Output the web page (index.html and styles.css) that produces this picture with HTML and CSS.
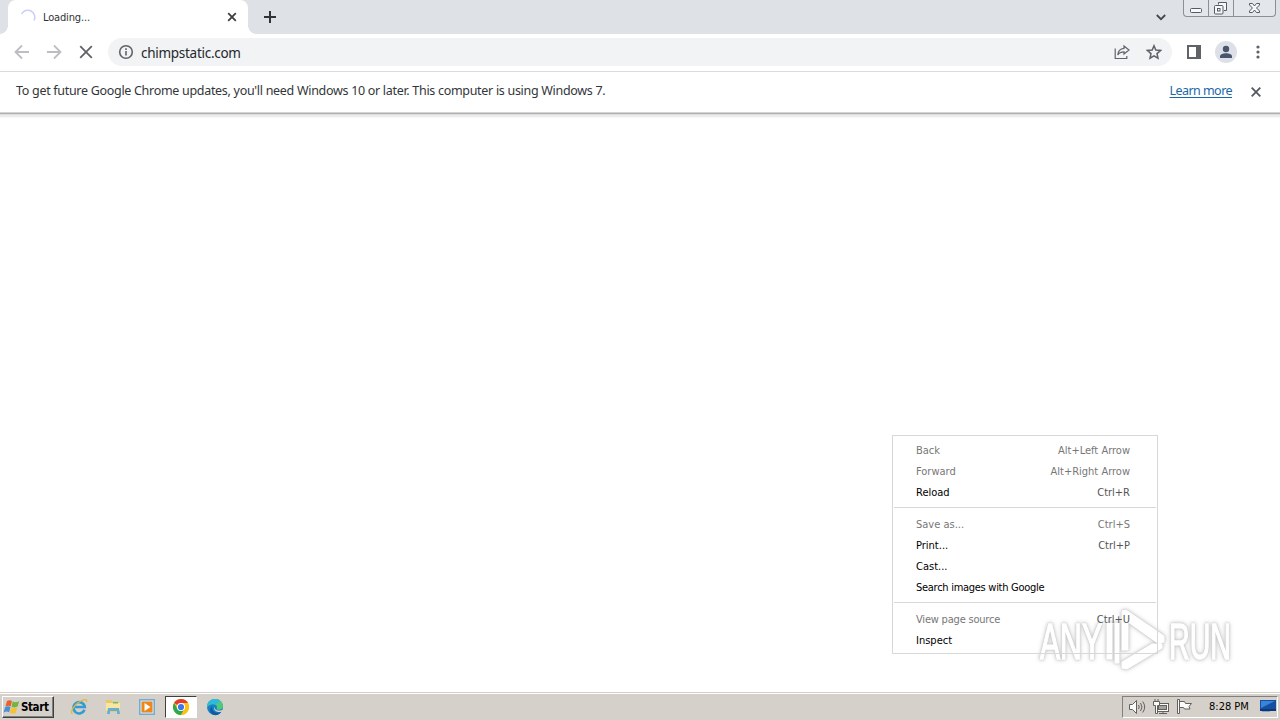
FILE: index.html
```html
<!DOCTYPE html>
<html lang="en">
<head>
<meta charset="utf-8">
<title>Loading...</title>
<link rel="stylesheet" href="styles.css">
</head>
<body>
<div class="screen">
  <header class="tabstrip">
    <div class="tab">
      <svg class="spinner" width="16" height="16" viewBox="0 0 16 16"><path d="M1.500 5A7 7 0 0 1 14 11.500"/></svg>
      <span class="tab-title">Loading...</span>
      <svg width="10" height="10" viewBox="0 0 10 10" class="tab-close"><path d="M1.200 1.200l7.600 7.600M8.800 1.200L1.200 8.800"/></svg>
    </div>
    <svg class="new-tab" width="12" height="12" viewBox="0 0 12 12"><path d="M6 0v12M0 6h12"/></svg>
    <svg class="tab-search" width="10" height="7" viewBox="0 0 10 7"><path d="M.8 1L5 5.200 9.200 1"/></svg>
    <div class="window-controls">
      <span class="control"><svg width="24" height="16" viewBox="0 0 24 16"><rect x="6.500" y="8.500" width="11" height="4" rx="1"/></svg></span>
      <span class="control"><svg width="24" height="16" viewBox="0 0 24 16"><path d="M9.500 4.500v-2h8v8h-2.500"/><rect x="5.500" y="5.500" width="8.500" height="8.500" rx="1"/><rect x="8.500" y="8.500" width="2.500" height="2.500"/></svg></span>
      <span class="control wide"><svg width="40" height="16" viewBox="0 0 40 16"><path d="M15.500 3.500h3l2 2.500 2-2.500h3v1.500l-3 3 3 3v1.500h-3l-2-2.500-2 2.500h-3v-1.500l3-3-3-3z"/></svg></span>
    </div>
  </header>
  <div class="toolbar">
    <svg class="nav faint" width="16" height="16" viewBox="0 0 16 16"><path d="M15 8H2M8 1.500L1.500 8 8 14.500"/></svg>
    <svg class="nav faint" width="16" height="16" viewBox="0 0 16 16"><path d="M1 8h13M8 1.500L14.500 8 8 14.500"/></svg>
    <svg class="nav" width="16" height="16" viewBox="0 0 16 16"><path d="M2.200 2.200l11.600 11.600M13.800 2.200L2.200 13.800"/></svg>
    <div class="omnibox">
      <svg class="line-icon" width="16" height="16" viewBox="0 0 16 16"><circle cx="8" cy="8" r="6.300"/><path d="M8 7v4.500M8 4.300v1.700"/></svg>
      <span class="url">chimpstatic.com</span>
      <svg class="line-icon thin" width="16" height="16" viewBox="0 0 16 16"><path d="M1.200 4.500v10h11.600V12M10 2l5 4-5 4V7.800C7 7.800 5 8.700 3.800 11 4 7.200 6 4.700 10 4.300z"/></svg>
      <svg class="line-icon star" width="16" height="16" viewBox="0 0 16 16"><path d="M8 1.800l1.800 4.300 4.700.4-3.500 3.100 1 4.600L8 11.800l-4 2.400 1-4.600-3.500-3.100 4.700-.4z"/></svg>
    </div>
    <svg class="panel" width="14" height="14" viewBox="0 0 14 14"><path fill-rule="evenodd" d="M0 0h14v14H0zM2 2v10h7V2z"/></svg>
    <svg class="avatar" width="22" height="22" viewBox="0 0 22 22"><circle class="avatar-bg" cx="11" cy="11" r="11"/><circle cx="11" cy="8" r="3.200"/><path d="M5 17v-1.500c0-2 3-3.200 6-3.200s6 1.200 6 3.200V17z"/></svg>
    <svg class="dots" width="4" height="14" viewBox="0 0 4 14"><circle cx="2" cy="2" r="1.600"/><circle cx="2" cy="7" r="1.600"/><circle cx="2" cy="12" r="1.600"/></svg>
  </div>
  <div class="infobar">
    <span class="info-text">To get future Google Chrome updates, you'll need Windows 10 or later. This computer is using Windows 7.</span>
    <a class="learn">Learn more</a>
    <svg class="info-close" width="10" height="10" viewBox="0 0 10 10"><path d="M.7.7l8.600 8.600M9.300.7L.7 9.300"/></svg>
  </div>
  <main class="page"></main>
  <footer class="taskbar">
    <div class="start">
      <svg width="17" height="16" viewBox="0 0 17 16"><path fill="#e8622a" d="M4 2c2-1.200 3.500-.8 5 0L7.800 7.300c-1.600-.9-3-.9-5.300 0z"/><path fill="#72b43c" d="M9.700 2.500c2 1 3.600 1 6.500-.2l-1.600 5.300c-2 1-3.900 1.100-6 .1z"/><path fill="#4590d8" d="M2.200 8c2-1 3.700-.8 5.300 0l-1.400 5.200c-1.600-.8-3-.9-5.500.2z"/><path fill="#f6c231" d="M8.300 8.500c2 1 3.700 1 6 0l-1.600 5.400c-2 1-3.900.9-5.900-.1z"/></svg>
      <span class="start-label">Start</span>
    </div>
    <div class="launch">
      <span class="app"><svg width="18" height="18" viewBox="0 0 18 18"><path fill="none" stroke="#329cd5" stroke-width="2.600" d="M14.500 11.800A5.700 5.700 0 1 1 14.800 9H5"/><path fill="none" stroke="#e4b835" stroke-width="1.300" d="M2.500 15.800C-.5 14 4 7 9.500 3.800 14 1 17.500.8 16.500 4"/></svg></span>
      <span class="app"><svg width="18" height="18" viewBox="0 0 18 18"><path fill="#e9c968" d="M2 2h5l1 1.500h7V6h1v8H2z"/><path fill="#f8e6a0" d="M2 5h14v8H2z"/><path fill="#73b96b" d="M9 4h5v1.500H9z"/><path fill="#63afd5" d="M4 10h11l1 6h-3v-3H6v3H3z"/></svg></span>
      <span class="app"><svg width="18" height="18" viewBox="0 0 18 18"><path fill="#70acd9" d="M1 1h16v16H1z"/><path fill="#dceefa" d="M2.500 2.500h13v13h-13z"/><path fill="#ef8718" d="M3.500 3.500h11v11h-11z"/><path fill="#fff" d="M6.500 5l6 4-6 4z"/></svg></span>
      <span class="app active"><svg width="18" height="18" viewBox="0 0 18 18"><circle cx="9" cy="9" r="8" fill="#fbc116"/><path fill="#e33b2e" d="M9 9L2.070 5A8 8 0 0 1 15.930 5z"/><path fill="#2da94f" d="M2.070 5l3.470 6L9 12.900l3.500-1.900L9 17A8 8 0 0 1 2.070 5z"/><path fill="#fbc116" d="M9 17l3.470-6L9 5h6.930A8 8 0 0 1 9 17z"/><circle cx="9" cy="9" r="4.100" fill="#fff"/><circle cx="9" cy="9" r="3.100" fill="#3b78e7"/></svg></span>
      <span class="app"><svg width="18" height="18" viewBox="0 0 18 18"><circle cx="9" cy="9" r="8" fill="#1580ce"/><path fill="#4fcb78" d="M6 1.700c5-2 11 1.300 11 6.500 0 3-3.300 4.400-6.500 3 1.500-3-.5-5.200-3.500-5-2.500 0-4.500 1-6 3 0-3.500 2-6.500 5-7.500z"/><path fill="#2fb9da" d="M1 9c.2-5.200 4-8 8.200-8 2.500 0 4 .8 5 1.800L10 7C6.500 4.500 2.500 6 1 9z"/><path fill="#135a9d" d="M6.500 8.500c-1.500 4 2.500 7.500 8.500 5.700C12 18 8 18 5.500 15.500 3 13 4 9.500 6.500 8.500z"/><path fill="#d5d0c9" d="M8.500 8.500c-.8 3 3 5 7.500 3.500l2 0v2.500l-2.800-.7c-4.700 1.200-8.500-2-6.700-5.300z"/></svg></span>
    </div>
    <div class="tray">
      <svg class="tray-icon" width="18" height="16" viewBox="0 0 18 16"><path class="tray-fill" d="M1.500 5.500h3l4-4v13l-4-4h-3z"/><path d="M10.500 6q1.500 2 0 4M12.500 4q3 4 0 8M14.700 2.500q4 5.500 0 11"/></svg>
      <svg class="tray-icon" width="18" height="16" viewBox="0 0 18 16"><rect class="tray-fill" x="4.500" y="4.500" width="12" height="8"/><rect class="tray-shade" x="6.500" y="6.500" width="8" height="4"/><path class="tray-fill" d="M1.500 2.500h6v4h-2v8h-2v-8h-2zM3 0v3M6 0v3M7 14.500h8M11 12v2"/></svg>
      <svg class="tray-icon" width="18" height="16" viewBox="0 0 18 16"><path class="tray-fill" d="M1.500.5h2v14h-2zM3.500 2.500h5l1 2h6l-2.500 3 1 2.500H8.500l-1-1.500h-4z"/></svg>
      <span class="clock">8:28 PM</span>
      <svg class="desktop" width="16" height="15" viewBox="0 0 16 15"><path fill="#164fa2" d="M0 1h16v11H0z"/><path fill="#3684dc" d="M1 2h14L1 9z"/><path fill="#10376e" d="M0 10h16v2H0z"/><path fill="#78a9dc" d="M2 12h8v1H2z"/></svg>
    </div>
  </footer>

  <div class="watermark">
    <svg width="200" height="68" viewBox="0 0 200 68">
      <text class="wm-text" x="3" y="52" textLength="62" lengthAdjust="spacingAndGlyphs">ANY</text>
      <path d="M70 16h5v36h-5zM78 16h4v40h-4zM85 4l4-1 38 26v6l-5 2-31-22v28h-6zM85 55l30-18h10v4L90 62l-5-1z"/>
      <text class="wm-text" x="132" y="52" textLength="62" lengthAdjust="spacingAndGlyphs">RUN</text>
    </svg>
  </div>

  <nav class="menu">
    <div class="item off"><span>Back</span><span class="key">Alt+Left Arrow</span></div>
    <div class="item off"><span>Forward</span><span class="key">Alt+Right Arrow</span></div>
    <div class="item"><span>Reload</span><span class="key">Ctrl+R</span></div>
    <div class="rule"></div>
    <div class="item off"><span>Save as...</span><span class="key">Ctrl+S</span></div>
    <div class="item"><span>Print...</span><span class="key">Ctrl+P</span></div>
    <div class="item"><span>Cast...</span></div>
    <div class="item"><span class="long">Search images with Google</span></div>
    <div class="rule"></div>
    <div class="item off"><span class="source">View page source</span><span class="key dark">Ctrl+U</span></div>
    <div class="item"><span>Inspect</span></div>
  </nav>
</div>
</body>
</html>
```
FILE: styles.css
```css
* { box-sizing: border-box; }
body { margin: 0; }
svg { display: block; flex: none; }
.screen {
  position: relative;
  width: 1280px;
  height: 720px;
  display: flex;
  flex-direction: column;
  overflow: hidden;
  background: #fff;
  font: 11px/14px "DejaVu Sans Condensed", "DejaVu Sans", sans-serif;
  font-stretch: condensed;
  color: #000;
  white-space: nowrap;
}
.tabstrip { height: 34px; flex: none; display: flex; background: #dee1e6; padding-left: 8px; }
.tab {
  position: relative;
  width: 240px;
  height: 34px;
  display: flex;
  align-items: center;
  padding: 0 11px 0 12px;
  background: #fff;
  border-radius: 8px 8px 0 0;
}
.tab::before, .tab::after {
  content: "";
  position: absolute;
  bottom: 0;
  width: 8px;
  height: 8px;
}
.tab::before { left: -8px; background: radial-gradient(circle at 0 0, transparent 7.5px, #fff 8px); }
.tab::after { right: -8px; background: radial-gradient(circle at 100% 0, transparent 7.5px, #fff 8px); }
.spinner { fill: none; stroke: #cbd0f4; stroke-width: 1.6; }
.tab-title { margin-left: 7px; padding-top: 1px; flex: 1; color: #303336; letter-spacing: -0.15px; }
.tab-close { fill: none; stroke: #3c4043; stroke-width: 1.8; }
.new-tab { margin: 11px 0 0 16px; fill: none; stroke: #30343a; stroke-width: 2; }
.tab-search { margin: 14px 17px 0 auto; fill: none; stroke: #45494e; stroke-width: 1.8; }
.window-controls {
  display: flex;
  height: 17px;
  width: 93px;
  margin-right: 4px;
  border: 1px solid #8b9097;
  border-top: 0;
  border-radius: 0 0 4px 4px;
  background: #e3e6eb;
}
.control { width: 25px; border-right: 1px solid #8b9097; }
.control.wide { width: 41px; border-right: 0; }
.control svg { fill: #f7f8fa; stroke: #555a63; stroke-width: 1; }
.toolbar {
  height: 38px;
  flex: none;
  display: flex;
  align-items: center;
  padding: 0 20px 1px 14px;
  border-bottom: 1px solid #d9dbde;
}
.nav { margin-right: 16px; fill: none; stroke: #5f6368; stroke-width: 1.8; }
.nav.faint { stroke: #bcbec1; }
.nav:nth-child(3) { margin-right: 14px; }
.omnibox {
  width: 1064px;
  height: 28px;
  display: flex;
  align-items: center;
  padding: 0 10px;
  border-radius: 14px;
  background: #f1f3f4;
}
.line-icon { fill: none; stroke: #5f6368; stroke-width: 1.6; }
.line-icon.thin { stroke-width: 1.2; }
.line-icon.star { margin-left: 16px; stroke-width: 1.5; }
.url { flex: 1; margin-left: 7px; padding-top: 2px; font: 13.5px/18px "Noto Sans", sans-serif; letter-spacing: -0.28px; color: #25282c; }
.panel { margin-left: 15px; fill: #5f6368; }
.avatar { margin-left: 14px; fill: #49546d; }
.avatar-bg { fill: #dde1e7; }
.dots { margin-left: auto; fill: #5f6368; }
.infobar {
  height: 41px;
  flex: none;
  display: flex;
  align-items: center;
  padding: 0 19px 1px 16px;
  border-bottom: 1px solid #d4d4d4;
  box-shadow: 0 1px #b0b0b0, 0 2px #dcdcdc, 0 4px #ececec, 0 5px #f8f8f8;
  font: 12.5px/18px "Noto Sans", sans-serif;
}
.info-text { flex: 1; padding-bottom: 1px; color: #333639; letter-spacing: -0.3px; }
.learn { margin-right: -1px; padding-bottom: 1px; color: #1967a8; letter-spacing: -0.55px; text-decoration: underline; text-underline-offset: 2px; }
.info-close { margin-left: 20px; fill: none; stroke: #55595e; stroke-width: 1.8; }
.page { flex: 1; }
.taskbar {
  height: 28px;
  flex: none;
  display: flex;
  align-items: center;
  padding: 1px 2px 1px;
  background: #d5d0c9;
  border-top: 1px solid #d4d0c8;
  box-shadow: inset 0 1px #fff;
}
.start {
  width: 52px;
  height: 22px;
  display: flex;
  align-items: center;
  border: 1px solid;
  border-color: #fff #404040 #404040 #fff;
  box-shadow: inset -1px -1px #808080;
}
.start-label { margin-left: 1px; font-size: 11.5px; font-weight: bold; letter-spacing: -0.4px; }
.launch { display: flex; margin-left: 9px; }
.app { width: 32px; height: 22px; margin-right: 2px; display: flex; align-items: center; justify-content: center; }
.app.active { background: #fff; border: 1px solid; border-color: #404040 #fff #fff #404040; }
.tray {
  width: 156px;
  height: 22px;
  margin-left: auto;
  display: flex;
  align-items: center;
  padding-left: 5px;
  border: 1px solid;
  border-color: #808080 #fff #fff #808080;
}
.tray-icon { margin-right: 6px; fill: none; stroke: #62605c; stroke-width: 1; }
.tray-fill { fill: #fafafa; }
.tray-shade { fill: #a4a29e; }
.clock { width: 42px; margin-left: 9px; padding-top: 1px; }
.desktop { margin-left: 9px; }
.menu {
  position: absolute;
  left: 892px;
  top: 435px;
  width: 266px;
  height: 219px;
  padding-top: 4px;
  border: 1px solid #d8d8d8;
}
.item { height: 21px; display: flex; align-items: center; justify-content: space-between; padding: 0 27px 0 23px; }
.long { letter-spacing: -0.28px; }
.source { letter-spacing: -0.2px; }
.key { color: #555; }
.off, .off .key { color: #777; }
.off .key.dark { color: #555; }
.rule { height: 1px; margin: 4px 1px 6px; background: #d8d8d8; }
.watermark {
  position: absolute;
  left: 1037px;
  top: 607px;
  fill: #fff;
  stroke: #fff;
  filter: drop-shadow(0 0 1px #c4c4c4) drop-shadow(0 0 2px #ccc);
}
.wm-text { font: 50px "Liberation Sans Narrow", "Liberation Sans", sans-serif; stroke-width: 1.5; }
```
